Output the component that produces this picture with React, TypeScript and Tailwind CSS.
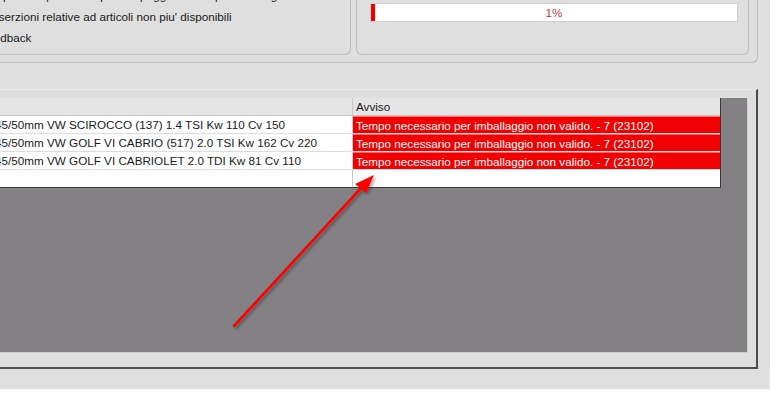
import React from "react";

const rows = [
  "45/50mm VW SCIROCCO (137) 1.4 TSI Kw 110 Cv 150",
  "45/50mm VW GOLF VI CABRIO (517) 2.0 TSI Kw 162 Cv 220",
  "45/50mm VW GOLF VI CABRIOLET 2.0 TDI Kw 81 Cv 110",
];

const msg = "Tempo necessario per imballaggio non valido. - 7 (23102)";

export default function App() {
  return (
    <div
      className="relative w-[770px] h-[405px] overflow-hidden bg-[#dfdfdf] text-[11.7px] text-[#1a1a1a]"
      style={{ fontFamily: '"Liberation Sans", Arial, sans-serif' }}
    >
      {/* Top group area */}
      <div className="w-[758px] h-[63px] flex gap-[5px] pr-[8px] pb-[7px] border-r border-b border-[#bdbdbd] rounded-br-[6px] overflow-hidden">
        <div className="w-[351px] h-full border-r border-b border-[#bdbdbd] rounded-br-[6px] overflow-hidden flex flex-col whitespace-nowrap">
          <div className="h-[21px] leading-[21px] mt-[-15px] ml-[-1px]">
            quantita' | Avvisi disponibili | Aggiorna tempi di consegna
          </div>
          <div className="h-[21px] leading-[21px] ml-[-11px]">
            Inserzioni relative ad articoli non piu' disponibili
          </div>
          <div className="h-[21px] leading-[21px] ml-[-20px]">Feedback</div>
        </div>
        <div className="flex-1 h-full border-l border-r border-b border-[#bdbdbd] rounded-b-[6px] pl-[13px] pr-[10px] pt-[3px]">
          <div className="relative h-[19px] bg-white border border-[#cfcfcf] flex items-center">
            <div className="absolute left-0 top-0 bottom-0 w-[4px] bg-[#ee0000]" />
            <div className="flex-1 text-center text-[#b5384a] leading-[17px]">1%</div>
          </div>
        </div>
      </div>

      {/* spacer */}
      <div className="h-[26px]" />

      {/* Grid frame */}
      <div className="w-[758px] h-[280px] border-t border-t-[#ececec] border-r-2 border-r-[#4d4d4d] border-b-2 border-b-[#4d4d4d] pt-[8px] pr-[8px] pb-[14px]">
        <div className="h-full w-full bg-[#838183] border-r border-b border-[#d0d0d0]">
          <div className="w-[721px] bg-white border-r border-b border-[#3a3a3a]">
            {/* header */}
            <div className="flex h-[18px] bg-[#e5e5e5] border-b border-[#c8c8c8]">
              <div className="w-[353px] border-r border-[#c8c8c8]" />
              <div className="flex-1 pl-[3px] leading-[17px]">Avviso</div>
            </div>
            {rows.map((r) => (
              <div key={r} className="flex h-[18px] border-b border-[#dcdcdc]">
                <div className="w-[353px] border-r border-[#c8c8c8] leading-[17px] whitespace-nowrap overflow-hidden">
                  <span className="block ml-[-5px]">{r}</span>
                </div>
                <div className="flex-1 bg-[#f00000] text-white pl-[3px] leading-[17px] whitespace-nowrap border-t border-[#ff6a6a]">
                  {msg}
                </div>
              </div>
            ))}
            <div className="flex h-[17px]">
              <div className="w-[353px] border-r border-[#c8c8c8]" />
              <div className="flex-1" />
            </div>
          </div>
        </div>
      </div>

      {/* bottom strip */}
      <div className="h-[20px] w-full border-r border-[#e8e8e8]" />
      <div className="h-[20px] w-full bg-white" />

      {/* arrow overlay */}
      <svg className="absolute left-0 top-0 pointer-events-none" width="770" height="405">
        <defs>
          <filter id="sh" x="-20%" y="-20%" width="140%" height="140%">
            <feDropShadow dx="2" dy="2" stdDeviation="1.5" floodColor="#000" floodOpacity="0.35" />
          </filter>
        </defs>
        <g filter="url(#sh)">
          <line x1="234" y1="326" x2="363" y2="186" stroke="#ff0000" strokeWidth="2.6" strokeLinecap="round" />
          <polygon points="374,175 355,184 366,193" fill="#ff0000" />
        </g>
      </svg>
    </div>
  );
}
